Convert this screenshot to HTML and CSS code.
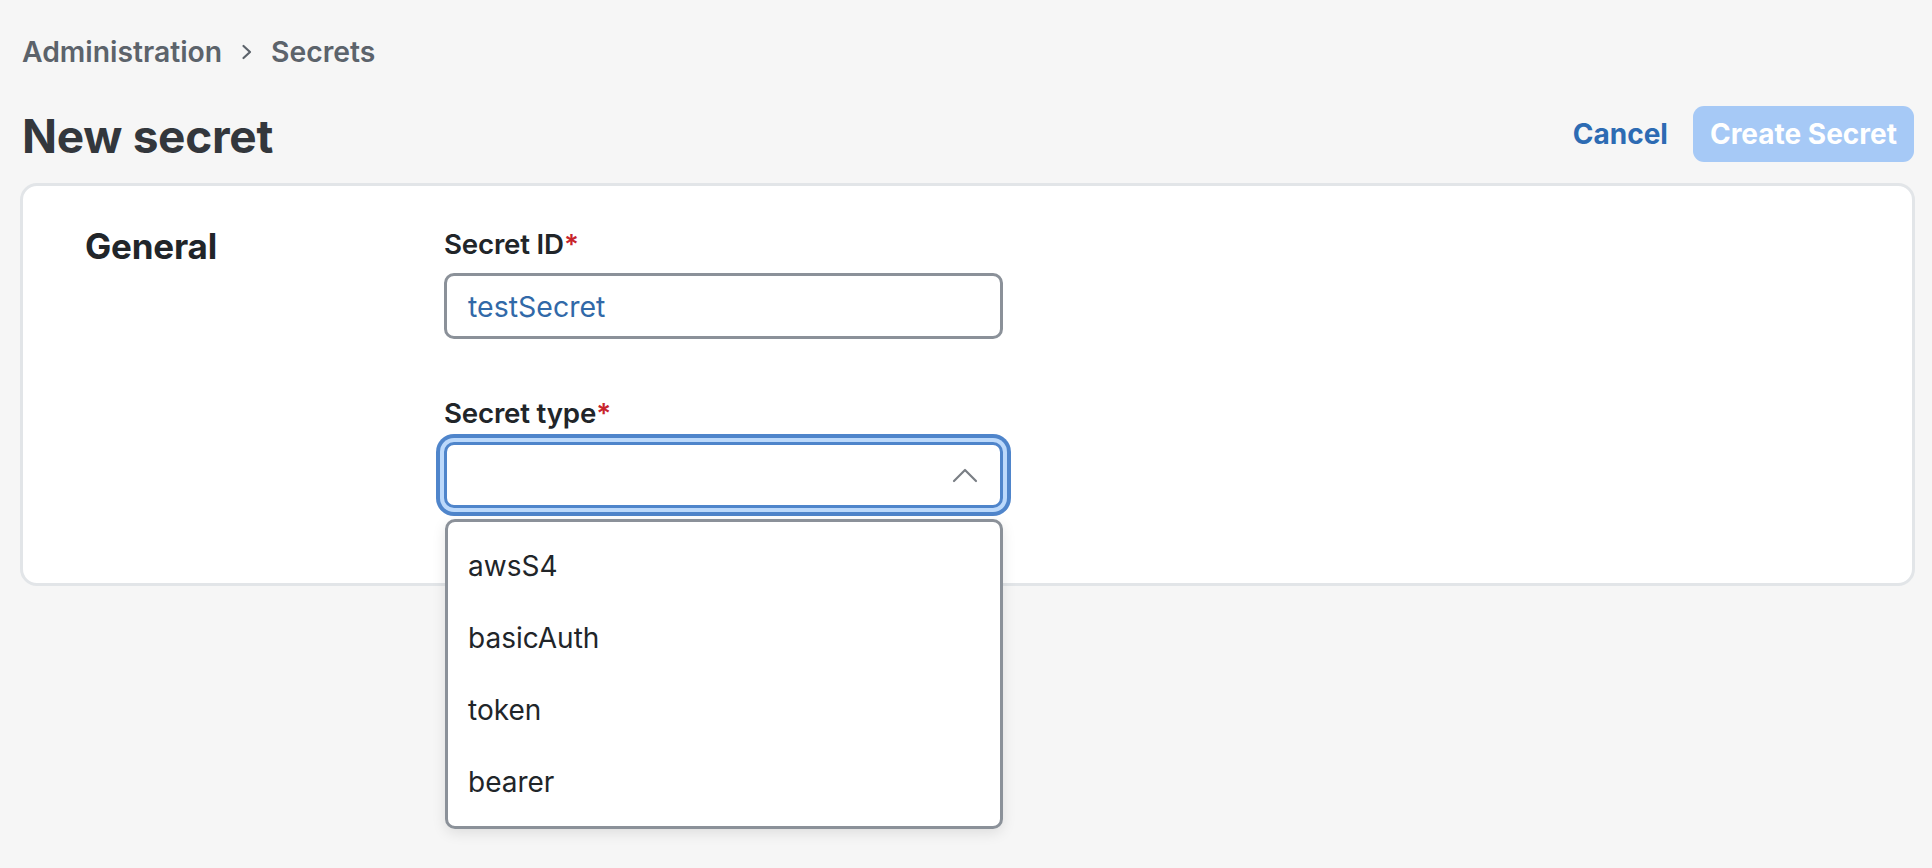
FILE: index.html
```html
<!DOCTYPE html>
<html lang="en">
<head>
<meta charset="utf-8">
<title>New secret</title>
<link rel="stylesheet" href="styles.css">
</head>
<body>
<div class="page">
  <nav class="breadcrumb">
    <span class="crumb">Administration</span>
    <svg class="crumb-sep" width="12" height="16" viewBox="0 0 12 16"><polyline points="2.5,2 9,8 2.5,14" fill="none" stroke="#5c636b" stroke-width="2.2" stroke-linecap="round" stroke-linejoin="round"/></svg>
    <span class="crumb">Secrets</span>
  </nav>
  <header class="page-header">
    <h1 class="title">New secret</h1>
    <div class="actions">
      <button class="btn-link">Cancel</button>
      <button class="btn-primary" disabled>Create Secret</button>
    </div>
  </header>
  <section class="card">
    <h2 class="section-title">General</h2>
    <div class="fields">
      <div class="field">
        <label class="label">Secret ID<span class="req">*</span></label>
        <div class="input"><span class="input-value">testSecret</span></div>
      </div>
      <div class="field field-select">
        <label class="label">Secret type<span class="req">*</span></label>
        <div class="select">
          <svg class="chevron" width="26" height="16" viewBox="0 0 26 16"><polyline points="2,14 13,3 24,14" fill="none" stroke="#7a7f85" stroke-width="2.2" stroke-linecap="round" stroke-linejoin="round"/></svg>
        </div>
        <ul class="menu">
          <li class="menu-item">awsS4</li>
          <li class="menu-item">basicAuth</li>
          <li class="menu-item">token</li>
          <li class="menu-item">bearer</li>
        </ul>
      </div>
    </div>
  </section>
</div>
</body>
</html>
```

FILE: styles.css
```css
* { box-sizing: border-box; }
html, body { margin: 0; padding: 0; }
body {
  background: #f6f6f6;
  font-family: "Inter", "Liberation Sans", sans-serif;
  color: #212529;
  width: 1932px;
  height: 868px;
  overflow: hidden;
}
.page {
  padding: 32px 17px 0 20px;
}
.breadcrumb {
  display: flex;
  align-items: center;
  height: 40px;
  padding-left: 2px;
  color: #5c636b;
  font-size: 28.3px;
  font-weight: 600;
  line-height: 40px;
}
.crumb-sep { margin: 0 18px 0 19px; }
.page-header {
  margin-top: 34px;
  height: 56px;
  display: flex;
  align-items: center;
  justify-content: space-between;
  padding: 0 1px 0 2px;
}
.title {
  margin: 0;
  font-size: 46px;
  font-weight: 700;
  line-height: 56px;
  padding-top: 3px;
  color: #33373c;
  letter-spacing: -0.3px;
}
.actions {
  display: flex;
  align-items: center;
  gap: 25px;
}
.btn-link {
  border: none;
  background: none;
  padding: 0;
  font-family: inherit;
  font-size: 28px;
  font-weight: 700;
  color: #2d6bb3;
}
.btn-primary {
  border: none;
  height: 56px;
  padding: 0 17px;
  border-radius: 11px;
  background: #a6c9f6;
  color: #ffffff;
  font-family: inherit;
  font-size: 28px;
  font-weight: 700;
}
.card {
  margin-top: 21px;
  height: 403px;
  background: #ffffff;
  border: 3px solid #e2e5e8;
  border-radius: 17px;
  padding: 40px 0 0 62px;
  display: flex;
}
.section-title {
  margin: 0;
  width: 359px;
  font-size: 35px;
  font-weight: 700;
  line-height: 40px;
  color: #212529;
  letter-spacing: -0.2px;
}
.fields {
  width: 559px;
  display: flex;
  flex-direction: column;
  gap: 56px;
}
.field { position: relative; }
.label {
  display: block;
  font-size: 27.7px;
  font-weight: 600;
  line-height: 36px;
  color: #212529;
  letter-spacing: -0.2px;
}
.req { color: #c8242c; }
.input {
  margin-top: 11px;
  height: 66px;
  border: 3px solid #8b9199;
  border-radius: 10px;
  background: #fff;
  display: flex;
  align-items: center;
  padding-left: 21px;
}
.input-value {
  font-size: 28.5px;
  color: #3169a8;
}
.select {
  margin-top: 11px;
  height: 66px;
  border: 3px solid #4f85cb;
  border-radius: 10px;
  background: #fff;
  box-shadow: 0 0 0 4px #bcd9fb, 0 0 0 8px #4f85cb;
  display: flex;
  align-items: center;
  justify-content: flex-end;
  padding-right: 22px;
}
.menu {
  position: absolute;
  left: 1px;
  right: 0;
  top: 124px;
  margin: 0;
  padding: 8px 0;
  list-style: none;
  background: #fff;
  border: 3px solid #8b9199;
  border-radius: 10px;
  box-shadow: 0 4px 14px rgba(0, 0, 0, 0.10);
  z-index: 2;
}
.menu-item {
  height: 72px;
  line-height: 72px;
  padding-left: 20px;
  font-size: 28px;
  color: #212529;
}
```
